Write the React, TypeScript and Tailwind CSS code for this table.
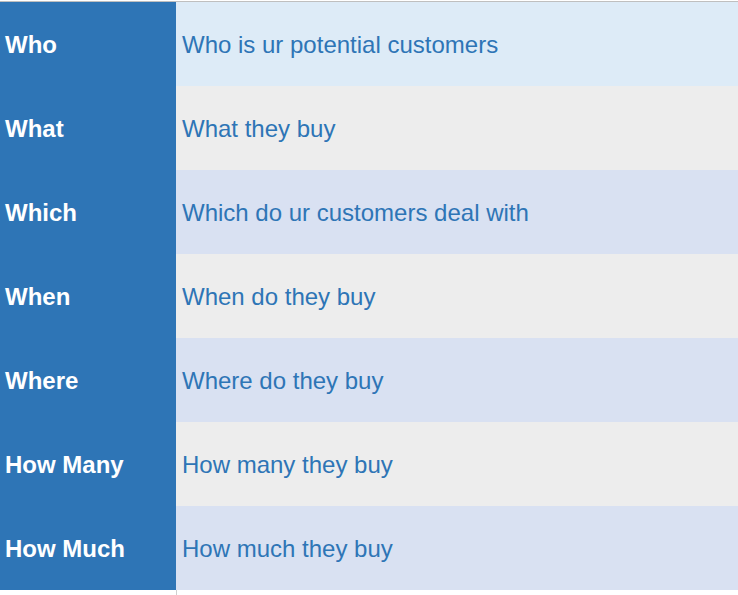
import React from 'react'

const rows = [
  { label: 'Who', text: 'Who is ur potential customers', bg: 'bg-[#ddebf7]' },
  { label: 'What', text: 'What they buy', bg: 'bg-[#ededed]' },
  { label: 'Which', text: 'Which do ur customers deal with', bg: 'bg-[#d9e1f2]' },
  { label: 'When', text: 'When do they buy', bg: 'bg-[#ededed]' },
  { label: 'Where', text: 'Where do they buy', bg: 'bg-[#d9e1f2]' },
  { label: 'How Many', text: 'How many they buy', bg: 'bg-[#ededed]' },
  { label: 'How Much', text: 'How much they buy', bg: 'bg-[#d9e1f2]' },
]

const App = () => {
  return (
    <div className="w-[738px] h-[595px] bg-white overflow-hidden font-['Liberation_Sans',Arial,sans-serif]">
      <div className="mt-px border-t border-[#bfbfbf]">
        {rows.map((r) => (
          <div key={r.label} className="flex h-[84px]">
            <div className="w-[176px] bg-[#2e75b6] flex items-center pl-[5px] pt-[2px] text-white font-bold text-[24px]">
              {r.label}
            </div>
            <div className={`flex-1 ${r.bg} flex items-center pl-[6px] pt-[2px] text-[#2e75b6] text-[24px]`}>
              {r.text}
            </div>
          </div>
        ))}
      </div>
      <div className="ml-[176px] w-px h-[10px] bg-[#d0d0d0]" />
    </div>
  )
}

export default App
